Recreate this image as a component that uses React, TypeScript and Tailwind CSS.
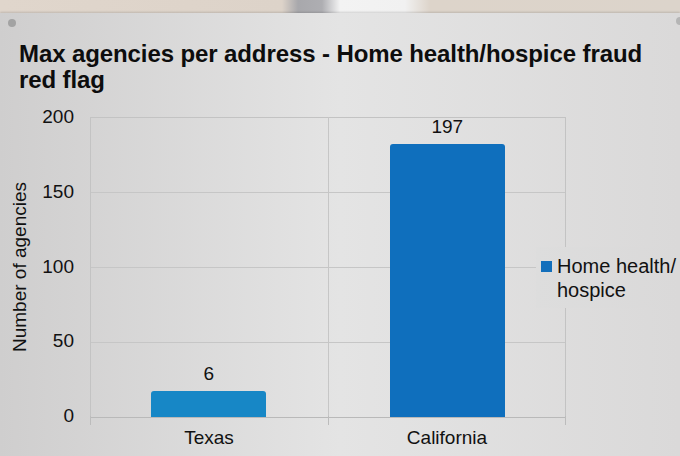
const bars = [
  { label: "Texas", value: "6", height: 26, color: "bg-[#1787c6]" },
  { label: "California", value: "197", height: 273, color: "bg-[#0f6fbd]" },
];

const ticks = ["200", "150", "100", "50", "0"];

const App = () => {
  return (
    <div className="w-[680px] h-[456px] flex flex-col overflow-hidden font-['Liberation_Sans',Arial,sans-serif] text-[#111]">
      {/* background above the sheet */}
      <div className="h-[13px] shrink-0 bg-[linear-gradient(to_right,#e0d6cc_0,#ddd3c9_282px,#a8a8ac_298px,#aeaeb2_322px,#f3f3f3_340px,#f1f1f1_405px,#ddd4ca_430px,#dcd4cb_100%)]" />

      {/* paper */}
      <div className="relative flex-1 flex flex-col bg-linear-to-r from-[#cfcece] via-[#e4e4e4] via-50% to-[#dad9d9] shadow-[0_-1px_2px_rgba(0,0,0,0.15)]">
        <span className="absolute left-[8px] top-[6px] w-[8px] h-[8px] rounded-full bg-[#a3a3a3]" />
        <span className="absolute right-[-4px] top-[4px] w-[8px] h-[8px] rounded-full bg-[#b5b5b5]" />

        {/* Title */}
        <h1 className="pl-[19px] pt-[28px] pr-[20px] text-[24px] leading-[26px] font-bold tracking-[-0.1px] text-[#0d0d0d]">
          Max agencies per address - Home health/hospice fraud red flag
        </h1>

        {/* Chart */}
        <div className="relative flex pt-[24px]">
          {/* Y axis title */}
          <div className="w-[40px] h-[299px] flex items-center justify-center">
            <div className="-rotate-90 whitespace-nowrap text-[19px] leading-[22px]">Number of agencies</div>
          </div>

          {/* Tick labels */}
          <div className="w-[50px] h-[299px] pr-[16px] flex flex-col justify-between items-end">
            {ticks.map((t) => (
              <div key={t} className="h-0 flex items-center text-[19px] leading-[22px]">
                {t}
              </div>
            ))}
          </div>

          {/* Plot */}
          <div className="w-[476px] flex flex-col">
            <div className="grid h-[299px]">
              <div className="col-start-1 row-start-1 flex flex-col border-t border-l border-r border-[#c3c3c3]">
                <div className="flex-1 border-b border-[#c6c6c6]" />
                <div className="flex-1 border-b border-[#c6c6c6]" />
                <div className="flex-1 border-b border-[#c6c6c6]" />
                <div className="flex-1 border-b border-[#b9b9b9]" />
              </div>
              <div className="col-start-1 row-start-1 flex pb-px">
                {bars.map((b, i) => (
                  <div
                    key={b.label}
                    className={
                      i === 0
                        ? "flex-1 flex flex-col justify-end items-center border-r border-[#c6c6c6]"
                        : "flex-1 flex flex-col justify-end items-center"
                    }
                  >
                    <div className="text-[19px] leading-[20px] mb-[7px]">{b.value}</div>
                    <div className={`w-[115px] rounded-t-[3px] ${b.color}`} style={{ height: b.height }} />
                  </div>
                ))}
              </div>
            </div>

            {/* axis ticks below */}
            <div className="h-[9px] flex">
              <div className="flex-1 border-l border-[#bcbcbc]" />
              <div className="flex-1 border-l border-r border-[#bcbcbc]" />
            </div>

            {/* X labels */}
            <div className="flex mt-[2px]">
              {bars.map((b) => (
                <div key={b.label} className="flex-1 text-center text-[19px] leading-[22px]">
                  {b.label}
                </div>
              ))}
            </div>
          </div>

          {/* Legend */}
          <div className="absolute left-[536px] top-[154px] h-[61px] w-[144px] pl-[5px] pt-[7px] flex items-start gap-[5px] bg-linear-to-r from-[#dddddd] to-[#dad9d9]">
            <span className="mt-[7px] w-[11px] h-[11px] shrink-0 bg-[#136fbb]" />
            <div className="text-[20px] leading-[24px] whitespace-nowrap">
              <div>Home health/</div>
              <div>hospice</div>
            </div>
          </div>
        </div>
      </div>
    </div>
  );
};

export default App;
